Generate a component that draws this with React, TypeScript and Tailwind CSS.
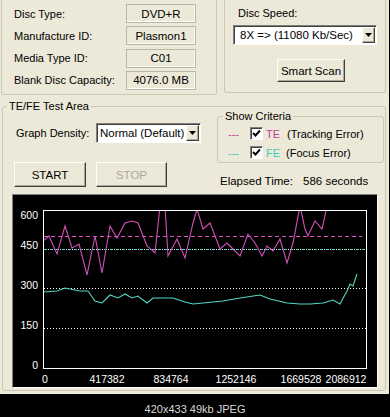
import React from "react";

const te =
  "43,240 49,235 57,253 65,225 72,247 79,243 87,274 95,235 102,272 110,225 117,237 125,222 132,220 138,222 147,245 155,252 160,205 165,205 168,255 177,238 185,257 193,222 197,208 203,228 210,222 215,235 220,248 227,242 233,248 240,255 248,233 255,242 262,255 267,245 273,250 280,238 287,262 293,242 300,205 305,228 308,235 315,220 322,228 327,205";
const fe =
  "43,291 57,290 65,287 80,290 88,290 95,300 102,302 110,294 118,297 125,293 132,297 138,295 147,302 153,297 173,297 185,301 193,303 203,302 223,300 240,297 260,294 270,298 287,302 300,303 310,303 323,302 333,299 340,303 347,290 350,283 353,285 357,273";

const yLabels = [
  { t: "600", y: 218 },
  { t: "450", y: 248 },
  { t: "300", y: 288 },
  { t: "150", y: 328 },
  { t: "0", y: 368 },
];
const xLabels = [
  { t: "0", x: 45 },
  { t: "417382", x: 107 },
  { t: "834764", x: 171 },
  { t: "1252146", x: 236 },
  { t: "1669528", x: 301 },
  { t: "2086912", x: 346 },
];

const raised =
  "border border-t-white border-l-white border-r-[#404040] border-b-[#404040] shadow-[inset_-1px_-1px_0_#aca899] bg-[#ece9d8]";
const sunken =
  "border border-t-[#808080] border-l-[#808080] border-r-white border-b-white shadow-[inset_1px_1px_0_#404040]";

function ValueRow({ label, value }: { label: string; value: string }) {
  return (
    <div className="flex h-[19px] items-center">
      <span className="w-[124px] shrink-0 pl-[12px]">{label}</span>
      <div className="flex h-[19px] w-[70px] items-center justify-center border border-[#b9b6a6] text-[11.5px] shadow-[inset_-1px_-1px_0_#fff]">
        {value}
      </div>
    </div>
  );
}

function Arrow() {
  return (
    <div className={`ml-auto mr-[1px] flex h-[16px] w-[13px] shrink-0 items-center justify-center ${raised}`}>
      <svg width="7" height="4" viewBox="0 0 7 4">
        <path d="M0 0h7L3.5 4z" fill="#000" />
      </svg>
    </div>
  );
}

function Check() {
  return (
    <div className={`flex h-[13px] w-[13px] shrink-0 items-center justify-center bg-white ${sunken}`}>
      <svg width="11" height="11" viewBox="0 0 11 11">
        <polyline points="2,5 4.5,7.5 9,2.5" fill="none" stroke="#000" strokeWidth="1.9" />
      </svg>
    </div>
  );
}

function Chart() {
  return (
    <div className="ml-[9px] mt-[6px] h-[194px] w-[366px] border border-t-[#808080] border-l-[#808080] border-r-white border-b-white bg-black">
      <svg viewBox="13 194 364 192" className="block h-full w-full">
        <defs>
          <clipPath id="plot">
            <rect x="43" y="209" width="324" height="159" />
          </clipPath>
        </defs>
        <line x1="44" x2="362" y1="235.5" y2="235.5" stroke="#e050c8" strokeDasharray="4 3" />
        <line x1="44" x2="366" y1="248.5" y2="248.5" stroke="#4fd8c8" strokeDasharray="3 3" />
        <line x1="44" x2="366" y1="248.5" y2="248.5" stroke="#fff" strokeDasharray="1 5" strokeDashoffset="-4" />
        <line x1="44" x2="366" y1="287.5" y2="287.5" stroke="#fff" strokeDasharray="1 2" />
        <line x1="44" x2="366" y1="327.5" y2="327.5" stroke="#fff" strokeDasharray="1 2" />
        <g clipPath="url(#plot)" fill="none">
          <polyline points={te} stroke="#d050b8" strokeWidth="1.1" />
          <polyline points={fe} stroke="#50d8c4" strokeWidth="1.1" />
        </g>
        <rect x="43.5" y="209.5" width="323" height="158" fill="none" stroke="#fff" />
        <g fill="#fff" fontFamily="Liberation Sans, Arial, sans-serif" fontSize="10.5">
          {yLabels.map((l) => (
            <text key={l.t} x="38" y={l.y} textAnchor="end">
              {l.t}
            </text>
          ))}
          {xLabels.map((l) => (
            <text key={l.t} x={l.x} y="382" textAnchor="middle">
              {l.t}
            </text>
          ))}
        </g>
      </svg>
    </div>
  );
}

export default function App() {
  return (
    <div className="flex h-[417px] w-[390px] flex-col whitespace-nowrap bg-black font-['Liberation_Sans',Arial,sans-serif] text-[11px] leading-[14px] text-black">
      <div className="h-[394px] w-[389px] bg-[#ece9d8]">
        {/* disc info + speed */}
        <div className="flex h-[97px] items-start">
          <div className="ml-px flex h-[95px] w-[216px] flex-col gap-[3.3px] rounded-b-[3px] border-x border-b border-[#cbc7b6] pt-[4px]">
            <ValueRow label="Disc Type:" value="DVD+R" />
            <ValueRow label="Manufacture ID:" value="Plasmon1" />
            <ValueRow label="Media Type ID:" value="C01" />
            <ValueRow label="Blank Disc Capacity:" value="4076.0 MB" />
          </div>
          <div className="ml-[7px] h-[93px] w-[162px] rounded-b-[3px] border-x border-b border-[#cbc7b6] pt-[6px]">
            <div className="pl-[13px]">Disc Speed:</div>
            <div className={`ml-[8px] mt-[5px] flex h-[20px] w-[144px] items-center bg-white pl-[6px] text-[11.5px] ${sunken}`}>
              <span>8X =&gt; (11080 Kb/Sec)</span>
              <Arrow />
            </div>
            <button className={`ml-[52px] mt-[14px] h-[23px] w-[68px] text-[11.5px] ${raised}`}>Smart Scan</button>
          </div>
        </div>

        {/* test area */}
        <fieldset className="ml-[2px] mt-[2px] w-[384px] rounded-[3px] border border-[#cbc7b6] pb-[2px]">
          <legend className="ml-[4px] px-[2px] leading-[14px]">TE/FE Test Area</legend>
          <div className="flex">
            <div className="w-[214px] shrink-0">
              <div className="mt-[10px] flex items-center">
                <span className="w-[93px] shrink-0 pl-[13px]">Graph Density:</span>
                <div className={`flex h-[20px] w-[105px] items-center bg-white pl-[3px] text-[11.5px] ${sunken}`}>
                  <span>Normal (Default)</span>
                  <Arrow />
                </div>
              </div>
              <div className="ml-[11px] mt-[19px] flex gap-[10px] text-[11.5px]">
                <button className={`h-[25px] w-[72px] ${raised}`}>START</button>
                <button className={`h-[25px] w-[71px] text-[#aca899] ${raised}`}>STOP</button>
              </div>
            </div>
            <div>
              <fieldset className="mt-[-4px] h-[54px] w-[167px] rounded-[3px] border border-[#cbc7b6]">
                <legend className="ml-[5px] px-[2px] leading-[14px]">Show Criteria</legend>
                <div className="flex flex-col gap-[2px] pt-[2px]">
                  <div className="flex h-[17px] items-center">
                    <span className="ml-[10px] w-[22px] text-[#c03ca0]">---</span>
                    <Check />
                    <span className="ml-[3px] w-[21px] text-[#c03ca0]">TE</span>
                    <span>(Tracking Error)</span>
                  </div>
                  <div className="flex h-[17px] items-center">
                    <span className="ml-[10px] w-[22px] text-[#40c8c0]">---</span>
                    <Check />
                    <span className="ml-[3px] w-[20px] text-[#40c8c0]">FE</span>
                    <span>(Focus Error)</span>
                  </div>
                </div>
              </fieldset>
              <div className="ml-[3px] mt-[11px] flex text-[11.5px]">
                <span className="w-[83px]">Elapsed Time:</span>
                <span>586 seconds</span>
              </div>
            </div>
          </div>
          <Chart />
        </fieldset>
      </div>
      <div className="flex flex-1 items-center justify-center pt-[6px] text-[11px] text-[#d8d8d8]">
        420x433 49kb JPEG
      </div>
    </div>
  );
}
